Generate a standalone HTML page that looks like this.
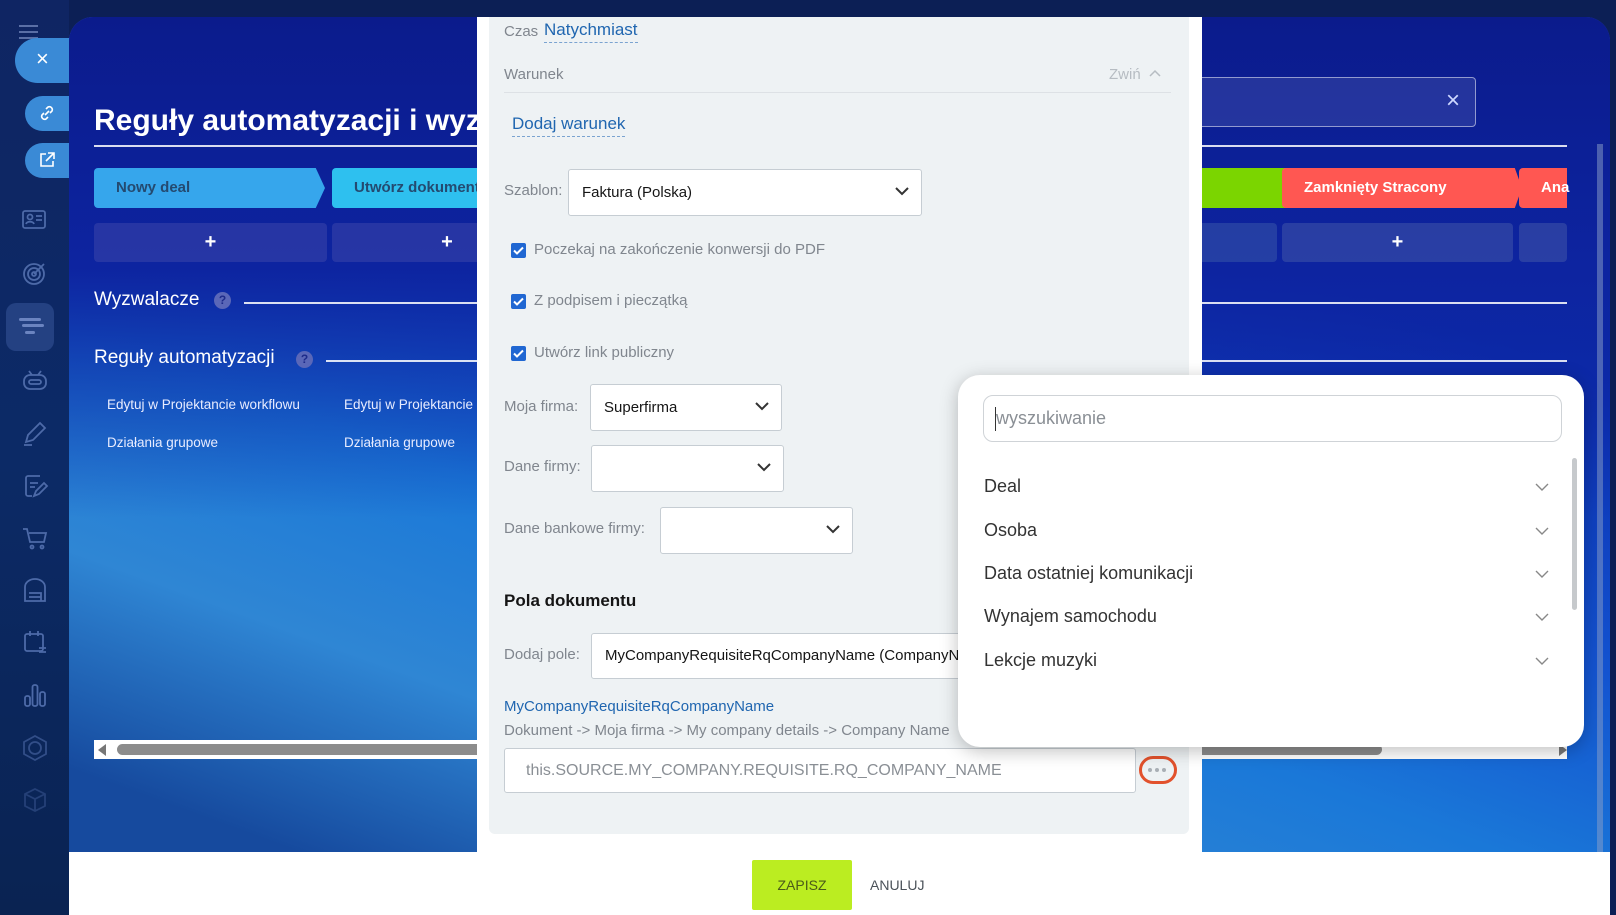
<!DOCTYPE html>
<html><head><meta charset="utf-8"><style>
*{box-sizing:border-box;margin:0;padding:0}
body{width:1616px;height:915px;overflow:hidden;position:relative;font-family:"Liberation Sans",sans-serif;background:#0c1f55}
.abs{position:absolute}
#side{left:0;top:0;width:69px;height:915px;background:linear-gradient(180deg,#0f2563 0%,#0c2a66 50%,#0a2352 100%)}
#bg{left:69px;top:17px;width:1541px;height:898px;border-radius:24px 24px 0 0;overflow:hidden;
background:linear-gradient(200deg,#0a2a9a 0%,#0b2eb0 25%,#1353d0 45%,#1a78d8 60%,#2f86d4 75%,#164a9e 90%);}
#bg:before{content:"";position:absolute;left:0;top:0;right:0;height:22px;background:rgba(90,110,210,.45)}
#bg:after{content:"";position:absolute;left:0;right:0;top:835px;bottom:0;background:#fff}
.sky{position:absolute;left:0;top:0;width:1541px;height:835px;background:linear-gradient(180deg,#0b1b8c 0%,#0d24a0 30%,rgba(20,80,200,0) 60%)}
.w{color:#fff}
.stage{position:absolute;top:151px;height:40px;font-size:15px;font-weight:bold;line-height:40px;padding-left:22px;border-radius:4px}
.plus{position:absolute;top:206px;height:39px;background:rgba(60,70,170,.55);border-radius:4px;color:#fff;text-align:center;line-height:39px;font-size:20px;font-weight:bold}
.hr{position:absolute;height:2px;background:rgba(255,255,255,.85)}
.lnk{position:absolute;color:#e8ecff;font-size:13.5px}
#modal{left:477px;top:17px;width:725px;height:898px;background:#fff}
#card{position:absolute;left:12px;top:0;width:700px;height:817px;background:#eef2f4;border-radius:0 0 6px 6px}
.lbl{position:absolute;color:#80868e;font-size:15px}
.sel{position:absolute;background:#fff;border:1px solid #c6cdd3;border-radius:3px;font-size:15px;color:#151515;padding-left:13px}
.chev{position:absolute;right:12px;top:50%;margin-top:-6px;width:14px;height:9px}
.cb{position:absolute;width:15px;height:15px;background:#2067d2;border-radius:2px}
.cbt{position:absolute;color:#80868e;font-size:15px}
#pop{left:958px;top:375px;width:626px;height:372px;background:#fff;border-radius:22px;box-shadow:0 4px 18px rgba(0,0,0,.25)}
.it{position:absolute;left:26px;font-size:18px;color:#333}
.ic{position:absolute;left:577px;width:14px;height:9px}
.sb{position:absolute;left:20px;width:30px;height:30px;stroke:#4d6aa8;fill:none;stroke-width:1.8}
</style></head><body>
<div id="side" class="abs">
 <div class="abs" style="left:19px;top:25px;width:19px;height:2px;background:#5a6fa6;box-shadow:0 6px 0 #5a6fa6,0 12px 0 #5a6fa6"></div>
 <svg class="sb" style="top:205px" viewBox="0 0 30 30"><rect x="3" y="6" width="22" height="17" rx="2"/><circle cx="10" cy="12" r="2.5"/><path d="M6 19c1-3 7-3 8 0M16 11h6M16 15h6"/></svg>
 <svg class="sb" style="top:258px" viewBox="0 0 30 30"><circle cx="14" cy="16" r="10"/><circle cx="14" cy="16" r="6"/><circle cx="14" cy="16" r="2"/><path d="M14 16l10-10"/></svg>
 <div class="abs" style="left:6px;top:303px;width:48px;height:48px;border-radius:10px;background:rgba(60,90,160,.5)"></div>
 <div class="abs" style="left:19px;top:318px;width:22px;height:3px;border-radius:2px;background:#6b84c0;box-shadow:3px 6px 0 -0px #6b84c0"></div>
 <div class="abs" style="left:25px;top:331px;width:10px;height:3px;border-radius:2px;background:#6b84c0"></div>
 <svg class="sb" style="top:365px" viewBox="0 0 30 30"><rect x="4" y="10" width="22" height="14" rx="6"/><path d="M9 6l3 4M21 6l-3 4"/><rect x="9" y="15" width="12" height="4" rx="2"/></svg>
 <svg class="sb" style="top:418px" viewBox="0 0 30 30"><path d="M6 24l2-7 12-12 5 5-12 12zM4 27h8"/></svg>
 <svg class="sb" style="top:470px" viewBox="0 0 30 30"><path d="M20 6h-12a2 2 0 0 0-2 2v16a2 2 0 0 0 2 2h4M10 13h8M10 17h5M14 26l2-5 8-8 3 3-8 8z"/></svg>
 <svg class="sb" style="top:523px" viewBox="0 0 30 30"><path d="M3 6h4l3 13h14l2-9H9"/><circle cx="12" cy="24" r="1.5"/><circle cx="22" cy="24" r="1.5"/></svg>
 <svg class="sb" style="top:575px" viewBox="0 0 30 30"><path d="M5 26V12a10 8 0 0 1 20 0v14H5zM9 18h12v8M9 22h12"/></svg>
 <svg class="sb" style="top:627px" viewBox="0 0 30 30"><rect x="5" y="7" width="18" height="17" rx="2"/><path d="M10 4v5M18 4v5M19 21h7M19 25h7"/></svg>
 <svg class="sb" style="top:680px" viewBox="0 0 30 30"><rect x="5" y="16" width="5" height="10" rx="2"/><rect x="12.5" y="5" width="5" height="21" rx="2"/><rect x="20" y="12" width="5" height="14" rx="2"/></svg>
 <svg class="sb" style="top:733px;opacity:.6" viewBox="0 0 30 30"><path d="M15 3l11 6v12l-11 6-11-6V9z"/><circle cx="15" cy="15" r="6"/></svg>
 <svg class="sb" style="top:785px;opacity:.4" viewBox="0 0 30 30"><path d="M15 4l10 5v12l-10 5-10-5V9zM5 9l10 5 10-5M15 14v12"/></svg>
 <div class="abs" style="left:15px;top:38px;width:56px;height:45px;border-radius:23px 0 0 23px;background:#3a8ad6"></div>
 <div class="abs" style="left:36px;top:46px;color:#fff;font-size:22px">×</div>
 <div class="abs" style="left:25px;top:96px;width:46px;height:35px;border-radius:18px 0 0 18px;background:#3a8ad6"></div>
 <svg class="abs" style="left:38px;top:104px" width="18" height="18" viewBox="0 0 18 18" fill="none" stroke="#fff" stroke-width="1.6"><path d="M7 11l4-4M8 5l2-2a3 3 0 0 1 4 4l-2 2M10 13l-2 2a3 3 0 0 1-4-4l2-2"/></svg>
 <div class="abs" style="left:25px;top:143px;width:46px;height:35px;border-radius:18px 0 0 18px;background:#3a8ad6"></div>
 <svg class="abs" style="left:38px;top:151px" width="18" height="18" viewBox="0 0 18 18" fill="none" stroke="#fff" stroke-width="1.6"><path d="M8 3H3v12h12v-5M10 2h6v6M16 2l-8 8"/></svg>
</div>

<div id="bg" class="abs"><div class="sky"></div>
 <div class="abs w" style="left:25px;top:87px;font-size:30px;font-weight:bold">Reguły automatyzacji i wyz</div>
 <div class="hr" style="left:25px;top:128px;width:1473px;height:1.5px"></div>
 <div class="abs" style="left:1040px;top:60px;width:367px;height:50px;border:1px solid rgba(255,255,255,.5);border-radius:4px;background:rgba(255,255,255,.1)"></div>
 <div class="abs" style="left:1377px;top:70px;color:#cfd8ff;font-size:24px">×</div>
 <div class="stage" style="left:25px;width:231px;background:#36a6ec;color:#244a70;clip-path:polygon(0 0,96% 0,100% 50%,96% 100%,0 100%)">Nowy deal</div>
 <div class="stage" style="left:263px;width:260px;background:#2ec0ef;color:#244a70">Utwórz dokument</div>
 <div class="stage" style="left:1060px;width:216px;background:#7bd500;color:#3b5a10;clip-path:polygon(0 0,96% 0,100% 50%,96% 100%,0 100%)">&nbsp;</div>
 <div class="stage" style="left:1213px;width:240px;background:#ff5752;color:#fff;clip-path:polygon(0 0,97% 0,100% 50%,97% 100%,0 100%)">Zamknięty Stracony</div>
 <div class="stage" style="left:1450px;width:48px;background:#ff5752;color:#fff;border-radius:4px 0 0 4px">Ana</div>
 <div class="plus" style="left:25px;width:233px">+</div>
 <div class="plus" style="left:263px;width:230px">+</div>
 <div class="plus" style="left:1040px;width:168px;background:rgba(60,90,170,.5)"></div>
 <div class="plus" style="left:1213px;width:231px;background:rgba(70,90,170,.5)">+</div>
 <div class="plus" style="left:1450px;width:48px;background:rgba(70,90,170,.5)"></div>
 <div class="abs w" style="left:25px;top:272px;font-size:19px">Wyzwalacze</div>
 <div class="abs" style="left:145px;top:275px;width:17px;height:17px;border-radius:50%;background:#5a67b8;color:#1d2b8a;font-size:12px;font-weight:bold;text-align:center;line-height:17px">?</div>
 <div class="hr" style="left:175px;top:285px;width:1323px"></div>
 <div class="abs w" style="left:25px;top:330px;font-size:19px">Reguły automatyzacji</div>
 <div class="abs" style="left:227px;top:334px;width:17px;height:17px;border-radius:50%;background:#5a67b8;color:#1d2b8a;font-size:12px;font-weight:bold;text-align:center;line-height:17px">?</div>
 <div class="hr" style="left:257px;top:343px;width:1241px"></div>
 <div class="lnk" style="left:38px;top:380px">Edytuj w Projektancie workflowu</div>
 <div class="lnk" style="left:275px;top:380px">Edytuj w Projektancie</div>
 <div class="lnk" style="left:38px;top:418px">Działania grupowe</div>
 <div class="lnk" style="left:275px;top:418px">Działania grupowe</div>
 <div class="abs" style="left:25px;top:723px;width:1473px;height:19px;background:#fff"></div>
 <div class="abs" style="left:29px;top:727px;width:0;height:0;border-top:6px solid transparent;border-bottom:6px solid transparent;border-right:8px solid #777"></div>
 <div class="abs" style="left:48px;top:727px;width:1265px;height:11px;border-radius:6px;background:#8c8c8c"></div>
 <div class="abs" style="left:1490px;top:727px;width:0;height:0;border-top:6px solid transparent;border-bottom:6px solid transparent;border-left:8px solid #777"></div>
 <div class="abs" style="left:1528px;top:127px;width:6px;height:708px;background:rgba(140,160,200,.5)"></div>
</div>

<div id="modal" class="abs">
 <div id="card">
  <div class="lbl" style="left:15px;top:6px">Czas</div>
  <div class="abs" style="left:55px;top:3px;font-size:17px;color:#2066b0;border-bottom:1px dashed #7aa3d0;padding-bottom:2px">Natychmiast</div>
  <div class="lbl" style="left:15px;top:49px">Warunek</div>
  <div class="abs" style="left:620px;top:49px;font-size:15px;color:#b6bcc2">Zwiń</div>
  <svg class="abs" style="left:660px;top:52px" width="12" height="8" viewBox="0 0 12 8" fill="none" stroke="#b6bcc2" stroke-width="1.5"><path d="M1 7l5-5 5 5"/></svg>
  <div class="abs" style="left:15px;top:75px;width:667px;height:1px;background:#dde1e5"></div>
  <div class="abs" style="left:23px;top:97px;font-size:17px;color:#2066b0;border-bottom:1px dashed #7aa3d0;padding-bottom:2px">Dodaj warunek</div>
  <div class="lbl" style="left:15px;top:165px">Szablon:</div>
  <div class="sel" style="left:79px;top:152px;width:354px;height:47px;line-height:45px">Faktura (Polska)<svg class="chev" viewBox="0 0 14 9" fill="none" stroke="#333" stroke-width="2"><path d="M1 1l6 6 6-6"/></svg></div>
  <div class="cb" style="left:22px;top:226px"></div><svg class="abs" style="left:24px;top:229px" width="11" height="9" viewBox="0 0 11 9" fill="none" stroke="#fff" stroke-width="2"><path d="M1 4.5l3 3 6-6"/></svg>
  <div class="cbt" style="left:45px;top:224px">Poczekaj na zakończenie konwersji do PDF</div>
  <div class="cb" style="left:22px;top:277px"></div><svg class="abs" style="left:24px;top:280px" width="11" height="9" viewBox="0 0 11 9" fill="none" stroke="#fff" stroke-width="2"><path d="M1 4.5l3 3 6-6"/></svg>
  <div class="cbt" style="left:45px;top:275px">Z podpisem i pieczątką</div>
  <div class="cb" style="left:22px;top:329px"></div><svg class="abs" style="left:24px;top:332px" width="11" height="9" viewBox="0 0 11 9" fill="none" stroke="#fff" stroke-width="2"><path d="M1 4.5l3 3 6-6"/></svg>
  <div class="cbt" style="left:45px;top:327px">Utwórz link publiczny</div>
  <div class="lbl" style="left:15px;top:381px">Moja firma:</div>
  <div class="sel" style="left:101px;top:367px;width:192px;height:47px;line-height:45px">Superfirma<svg class="chev" viewBox="0 0 14 9" fill="none" stroke="#333" stroke-width="2"><path d="M1 1l6 6 6-6"/></svg></div>
  <div class="lbl" style="left:15px;top:441px">Dane firmy:</div>
  <div class="sel" style="left:102px;top:428px;width:193px;height:47px"><svg class="chev" viewBox="0 0 14 9" fill="none" stroke="#333" stroke-width="2"><path d="M1 1l6 6 6-6"/></svg></div>
  <div class="lbl" style="left:15px;top:503px">Dane bankowe firmy:</div>
  <div class="sel" style="left:171px;top:490px;width:193px;height:47px"><svg class="chev" viewBox="0 0 14 9" fill="none" stroke="#333" stroke-width="2"><path d="M1 1l6 6 6-6"/></svg></div>
  <div class="abs" style="left:15px;top:574px;font-size:17px;font-weight:bold;color:#151515">Pola dokumentu</div>
  <div class="lbl" style="left:15px;top:629px">Dodaj pole:</div>
  <div class="sel" style="left:102px;top:616px;width:500px;height:46px;line-height:44px;white-space:nowrap;overflow:hidden">MyCompanyRequisiteRqCompanyName (CompanyName)</div>
  <div class="abs" style="left:15px;top:681px;font-size:15px;color:#2066b0">MyCompanyRequisiteRqCompanyName</div>
  <div class="lbl" style="left:15px;top:705px;white-space:nowrap">Dokument -&gt; Moja firma -&gt; My company details -&gt; Company Name</div>
  <div class="sel" style="left:15px;top:731px;width:632px;height:45px;line-height:43px;color:#8a8f95;font-size:16px;padding-left:21px">this.SOURCE.MY_COMPANY.REQUISITE.RQ_COMPANY_NAME</div>
  <div class="abs" style="left:650px;top:739px;width:38px;height:28px;border:3px solid #e2512c;border-radius:14px"></div>
  <div class="abs" style="left:659px;top:751px;width:4px;height:4px;border-radius:50%;background:#a9afb5;box-shadow:7px 0 0 #a9afb5,14px 0 0 #a9afb5"></div>
 </div>
 <div class="abs" style="left:275px;top:843px;width:100px;height:50px;background:#bbed21;border-radius:2px;color:#4b5a1a;font-size:14px;text-align:center;line-height:50px">ZAPISZ</div>
 <div class="abs" style="left:393px;top:860px;font-size:14px;color:#4b5259">ANULUJ</div>
</div>

<div id="pop" class="abs">
 <div class="abs" style="left:25px;top:20px;width:579px;height:47px;border:1px solid #cfd3d7;border-radius:10px"></div>
 <div class="abs" style="left:37px;top:32px;width:1px;height:24px;background:#333"></div>
 <div class="abs" style="left:38px;top:33px;font-size:18px;color:#8a8f95">wyszukiwanie</div>
 <div class="it" style="top:101px">Deal</div>
 <div class="it" style="top:145px">Osoba</div>
 <div class="it" style="top:188px">Data ostatniej komunikacji</div>
 <div class="it" style="top:231px">Wynajem samochodu</div>
 <div class="it" style="top:275px">Lekcje muzyki</div>
 <svg class="ic" style="top:108px" viewBox="0 0 14 9" fill="none" stroke="#888" stroke-width="1.4"><path d="M1 1l6 6 6-6"/></svg>
 <svg class="ic" style="top:152px" viewBox="0 0 14 9" fill="none" stroke="#888" stroke-width="1.4"><path d="M1 1l6 6 6-6"/></svg>
 <svg class="ic" style="top:195px" viewBox="0 0 14 9" fill="none" stroke="#888" stroke-width="1.4"><path d="M1 1l6 6 6-6"/></svg>
 <svg class="ic" style="top:238px" viewBox="0 0 14 9" fill="none" stroke="#888" stroke-width="1.4"><path d="M1 1l6 6 6-6"/></svg>
 <svg class="ic" style="top:282px" viewBox="0 0 14 9" fill="none" stroke="#888" stroke-width="1.4"><path d="M1 1l6 6 6-6"/></svg>
 <div class="abs" style="left:614px;top:83px;width:5px;height:152px;border-radius:3px;background:#c6c9cc"></div>
</div>
</body></html>
